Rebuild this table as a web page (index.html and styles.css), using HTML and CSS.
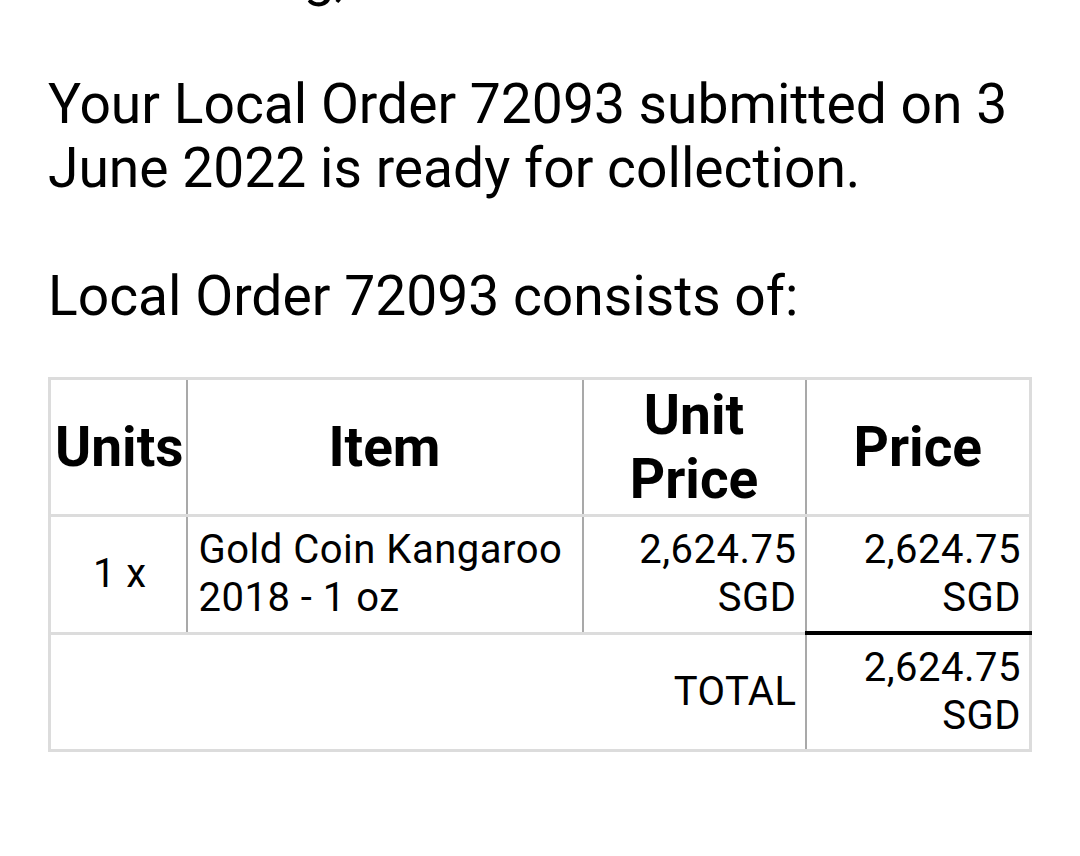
FILE: index.html
```html
<!DOCTYPE html>
<html>
<head>
<meta charset="utf-8">
<link rel="stylesheet" href="styles.css">
</head>
<body>
<div class="mail">
  <p class="greeting">Dear Mr Ng,</p>
  <p class="para">Your Local Order 72093 submitted on 3 June 2022 is ready for collection.</p>
  <p class="para last">Local Order 72093 consists of:</p>
  <table class="order">
    <colgroup>
      <col class="c-units">
      <col class="c-item">
      <col class="c-unit">
      <col class="c-price">
    </colgroup>
    <thead>
      <tr>
        <th>Units</th>
        <th>Item</th>
        <th>Unit Price</th>
        <th>Price</th>
      </tr>
    </thead>
    <tbody>
      <tr>
        <td class="center">1 x</td>
        <td class="left">Gold Coin Kangaroo 2018 - 1 oz</td>
        <td class="right">2,624.75 SGD</td>
        <td class="right">2,624.75 SGD</td>
      </tr>
      <tr class="total-row">
        <td class="right" colspan="3">TOTAL</td>
        <td class="right total">2,624.75 SGD</td>
      </tr>
    </tbody>
  </table>
</div>
</body>
</html>
```
FILE: styles.css
```css
html, body {
  margin: 0;
  padding: 0;
  background: #ffffff;
}

.mail {
  padding: 0 48px;
  font-family: Roboto, "Noto Sans", sans-serif;
  color: #000;
}

.para, .greeting {
  font-size: 55.2px;
  line-height: 64px;
  margin: 0 0 64px 0;
}

.greeting {
  margin-top: -56px;
  padding-left: 8px;
}

.para.last {
  margin-bottom: 49px;
}

.order {
  width: 100%;
  border-collapse: collapse;
  table-layout: fixed;
  border: 3px solid #dcdcdc;
}

.c-units { width: 137px; }
.c-item { width: 396px; }
.c-unit { width: 223px; }
.c-price { width: 225px; }

.order th,
.order td {
  border-left: 2px solid #a9a9a9;
  border-top: 3px solid #dcdcdc;
  vertical-align: middle;
}

.order th {
  font-size: 55px;
  line-height: 64px;
  font-weight: 700;
  padding: 3px 4px;
  text-align: center;
}

.order td {
  font-size: 40px;
  letter-spacing: 0.5px;
  line-height: 48px;
  padding: 9px 8px 9px 11px;
}

.center { text-align: center; }
.left { text-align: left; }
.right { text-align: right; }

.order td.total {
  border-top: 4px solid #000;
}
```
